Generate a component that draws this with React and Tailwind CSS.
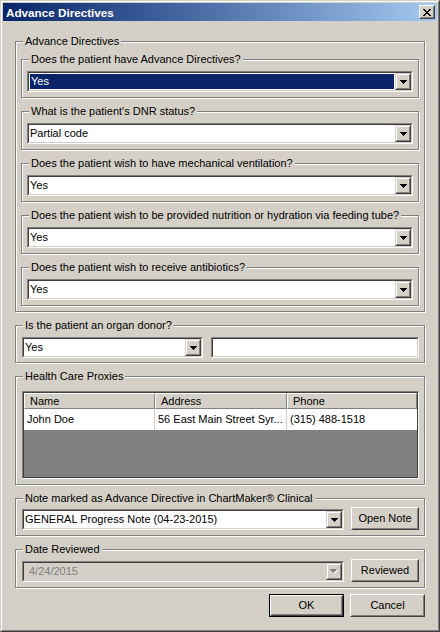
import React from "react";

const sunkO = "border border-t-[#808080] border-l-[#808080] border-r-white border-b-white";
const sunkI = "border border-t-[#404040] border-l-[#404040] border-r-[#d4d0c8] border-b-[#d4d0c8]";
const frameO = "border border-t-[#d4d0c8] border-l-[#d4d0c8] border-r-[#404040] border-b-[#404040]";
const frameI = "border border-t-white border-l-white border-r-[#808080] border-b-[#808080]";
const btnO = "border border-t-white border-l-white border-r-[#404040] border-b-[#404040]";
const btnI = "border border-t-[#d4d0c8] border-l-[#d4d0c8] border-r-[#808080] border-b-[#808080]";

function Arrow({ disabled }) {
  if (disabled)
    return (
      <svg width="8" height="5" viewBox="0 0 8 5" className="block" shapeRendering="crispEdges">
        <path d="M1 1h7v1H1zM2 2h5v1H2zM3 3h3v1H3zM4 4h1v1H4z" fill="#fff" />
        <path d="M0 0h7v1H0zM1 1h5v1H1zM2 2h3v1H2zM3 3h1v1H3z" fill="#808080" />
      </svg>
    );
  return (
    <svg width="7" height="4" viewBox="0 0 7 4" className="block" shapeRendering="crispEdges">
      <path d="M0 0h7v1H0zM1 1h5v1H1zM2 2h3v1H2zM3 3h1v1H3z" fill="#000" />
    </svg>
  );
}

function DropBtn({ disabled }) {
  return (
    <div className={`w-[16px] h-full shrink-0 ${frameO}`}>
      <div className={`h-full bg-[#d4d0c8] flex items-center justify-center ${frameI}`}>
        <Arrow disabled={disabled} />
      </div>
    </div>
  );
}

function Combo({ value, selected, disabled, className = "" }) {
  return (
    <div className={`h-[21px] ${sunkO} ${className}`}>
      <div className={`h-full flex ${sunkI} ${disabled ? "bg-[#d4d0c8]" : "bg-white"}`}>
        {selected ? (
          <div className="flex-1 min-w-0 m-[1px] bg-[#0a246a] text-white flex items-center pl-[1px]">{value}</div>
        ) : (
          <div
            className={`flex-1 min-w-0 flex items-center whitespace-nowrap overflow-hidden ${
              disabled ? "text-[#808080] pl-[5px]" : "pl-[1px]"
            }`}
          >
            {value}
          </div>
        )}
        <DropBtn disabled={disabled} />
      </div>
    </div>
  );
}

function Btn({ children, className = "", isDefault }) {
  const inner = (
    <div className={`h-full ${btnO}`}>
      <div className={`h-full flex items-center justify-center bg-[#d4d0c8] ${btnI}`}>{children}</div>
    </div>
  );
  if (isDefault)
    return <div className={`h-[23px] border border-black ${className}`}>{inner}</div>;
  return <div className={`h-[23px] ${className}`}>{inner}</div>;
}

function Group({ label, children, className = "", legendClass = "" }) {
  return (
    <fieldset
      className={`min-w-0 border border-[#808080] shadow-[inset_1px_1px_0_#fff,1px_1px_0_#fff] ${className}`}
    >
      <legend className={`px-[2px] leading-[13px] bg-[#d4d0c8] ${legendClass}`}>{label}</legend>
      {children}
    </fieldset>
  );
}

function InnerGroup({ label, children }) {
  return (
    <Group label={label} className="px-[5px] pt-[5px] pb-[5px]" legendClass="ml-[2px]">
      {children}
    </Group>
  );
}

function CloseX() {
  return (
    <svg width="8" height="7" viewBox="0 0 8 7" className="block" shapeRendering="crispEdges">
      <path
        d="M0 0h2v1H0zM6 0h2v1H6zM1 1h2v1H1zM5 1h2v1H5zM2 2h4v1H2zM3 3h2v1H3zM2 4h4v1H2zM1 5h2v1H1zM5 5h2v1H5zM0 6h2v1H0zM6 6h2v1H6z"
        fill="#000"
      />
    </svg>
  );
}

export default function App() {
  return (
    <div
      className={`w-[440px] h-[632px] bg-[#d4d0c8] text-black text-[11px] leading-[13px] font-['Liberation_Sans',Arial,sans-serif] ${frameO}`}
    >
      <div className={`h-full p-[1px] flex flex-col ${frameI}`}>
        {/* Title bar */}
        <div className="h-[18px] shrink-0 flex items-center bg-linear-to-r from-[#0a246a] to-[#a6caf0] pl-[3px] pr-[2px]">
          <span className="flex-1 text-white font-bold text-[11.7px]">Advance Directives</span>
          <div className={`w-[16px] h-[14px] ${btnO}`}>
            <div className={`h-full bg-[#d4d0c8] flex items-center justify-center ${btnI}`}>
              <CloseX />
            </div>
          </div>
        </div>

        {/* Client */}
        <div className="flex-1 flex flex-col px-[12px] pt-[14px]">
          <Group label="Advance Directives" className="px-[5px] pt-[5px] pb-[5px]" legendClass="ml-[2px]">
            <div className="flex flex-col gap-[7px]">
              <InnerGroup label="Does the patient have Advance Directives?">
                <Combo value="Yes" selected />
              </InnerGroup>
              <InnerGroup label="What is the patient's DNR status?">
                <Combo value="Partial code" />
              </InnerGroup>
              <InnerGroup label="Does the patient wish to have mechanical ventilation?">
                <Combo value="Yes" />
              </InnerGroup>
              <InnerGroup label="Does the patient wish to be provided nutrition or hydration via feeding tube?">
                <Combo value="Yes" />
              </InnerGroup>
              <InnerGroup label="Does the patient wish to receive antibiotics?">
                <Combo value="Yes" />
              </InnerGroup>
            </div>
          </Group>

          <Group
            label="Is the patient an organ donor?"
            className="mt-[7px] pl-[6px] pr-[5px] pt-[5px] pb-[4px]"
            legendClass="ml-[1px]"
          >
            <div className="flex gap-[8px]">
              <Combo value="Yes" className="w-[181px]" />
              <div className={`flex-1 h-[21px] ${sunkO}`}>
                <div className={`h-full bg-white ${sunkI}`} />
              </div>
            </div>
          </Group>

          <Group
            label="Health Care Proxies"
            className="mt-[7px] pl-[6px] pr-[5px] pt-[8px] pb-[5px]"
            legendClass="ml-[1px]"
          >
            <div className={`h-[88px] ${sunkO}`}>
              <div className="h-full border border-[#404040] bg-[#808080] flex flex-col">
                <div className="h-[16px] flex bg-[#d4d0c8]">
                  <div className={`w-[131px] pl-[5px] flex items-center ${frameI}`}>Name</div>
                  <div className={`w-[132px] pl-[5px] flex items-center ${frameI}`}>Address</div>
                  <div className={`flex-1 pl-[5px] flex items-center ${frameI}`}>Phone</div>
                </div>
                <div className="h-[21px] flex bg-white">
                  <div className="w-[131px] pl-[3px] flex items-center border-r border-r-[#d4d0c8] whitespace-nowrap overflow-hidden">
                    John Doe
                  </div>
                  <div className="w-[132px] pl-[3px] flex items-center border-r border-r-[#d4d0c8] whitespace-nowrap overflow-hidden">
                    56 East Main Street Syr...
                  </div>
                  <div className="flex-1 pl-[3px] flex items-center whitespace-nowrap overflow-hidden">
                    (315) 488-1518
                  </div>
                </div>
              </div>
            </div>
          </Group>

          <Group
            label="Note marked as Advance Directive in ChartMaker® Clinical"
            className="mt-[7px] pl-[6px] pr-[5px] pt-[2px] pb-[5px]"
            legendClass="ml-[1px]"
          >
            <div className="flex items-end gap-[7px]">
              <Combo value="GENERAL Progress Note (04-23-2015)" className="flex-1 min-w-0" />
              <Btn className="w-[68px]">Open Note</Btn>
            </div>
          </Group>

          <Group
            label="Date Reviewed"
            className="mt-[7px] pl-[6px] pr-[5px] pt-[3px] pb-[5px]"
            legendClass="ml-[1px]"
          >
            <div className="flex items-end gap-[7px]">
              <Combo value="4/24/2015" disabled className="flex-1 min-w-0" />
              <Btn className="w-[68px]">Reviewed</Btn>
            </div>
          </Group>

          <div className="mt-[6px] flex justify-end gap-[6px]">
            <Btn className="w-[75px]" isDefault>
              OK
            </Btn>
            <Btn className="w-[75px]">Cancel</Btn>
          </div>
        </div>
      </div>
    </div>
  );
}
